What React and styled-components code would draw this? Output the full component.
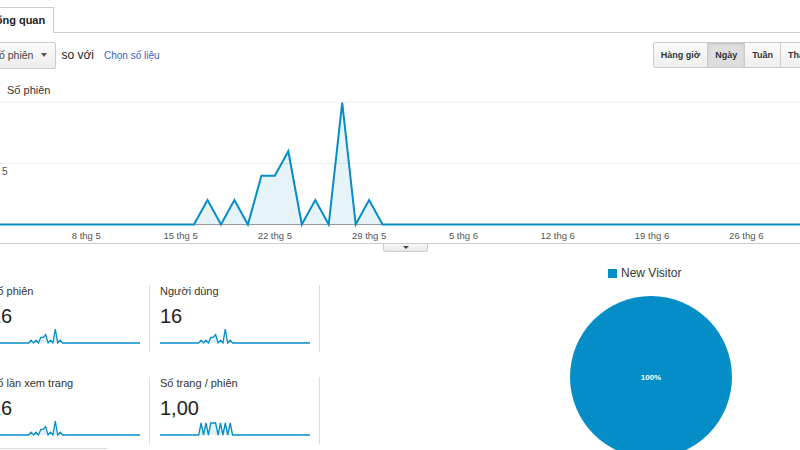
import styled, { createGlobalStyle } from "styled-components";

const GlobalStyle = createGlobalStyle`
  html, body {
    margin: 0;
    padding: 0;
    background: #fff;
    overflow: hidden;
  }
  body {
    font-family: "Liberation Sans", Arial, sans-serif;
  }
`;

const BLUE = "#058dc7";
const DAYS = 63;
const STEP = 13.47;
const X0 = -21.5;

const sessions = Array(DAYS).fill(0);
Object.entries({ 17: 2, 19: 2, 21: 4, 22: 4, 23: 6, 25: 2, 27: 10, 29: 2 }).forEach(
  ([d, v]) => (sessions[d] = v)
);
const pagesPerSession = sessions.map((v) => (v > 0 ? 1 : 0));

const dateLabels = [
  [8, "8 thg 5"],
  [15, "15 thg 5"],
  [22, "22 thg 5"],
  [29, "29 thg 5"],
  [36, "5 thg 6"],
  [43, "12 thg 6"],
  [50, "19 thg 6"],
  [57, "26 thg 6"],
];

const BASE = 224.5;
const UNIT = 12.2;

const mainPoints = sessions.map((v, d) => [X0 + d * STEP, BASE - v * UNIT]);
const toStr = (pts) => pts.map(([x, y]) => `${x.toFixed(1)},${y.toFixed(1)}`).join(" ");

const sparkPoints = (data, peak) => {
  const max = Math.max(...data);
  return data.map((v, d) => [(d * 150) / (DAYS - 1), 16 - (v / max) * peak]);
};

const stats = [
  { title: "Số phiên", value: "16", data: sessions, peak: 14 },
  { title: "Người dùng", value: "16", data: sessions, peak: 14 },
  { title: "Số lần xem trang", value: "16", data: sessions, peak: 14 },
  { title: "Số trang / phiên", value: "1,00", data: pagesPerSession, peak: 12 },
];

export default function App() {
  return (
    <>
      <GlobalStyle />
      <Page>
        <TabBar>
          <Tab>Tổng quan</Tab>
        </TabBar>

        <Controls>
          <Select>
            Số phiên
            <Caret />
          </Select>
          <Versus>so với</Versus>
          <MetricLink>Chọn số liệu</MetricLink>
          <ButtonGroup>
            <RangeButton>Hàng giờ</RangeButton>
            <RangeButton $active>Ngày</RangeButton>
            <RangeButton>Tuần</RangeButton>
            <RangeButton>Tháng</RangeButton>
          </ButtonGroup>
        </Controls>

        <ChartLabel>Số phiên</ChartLabel>
        <ChartBox>
          <svg width="840" height="145" viewBox="-20 98 840 145">
            <line x1="-20" x2="820" y1="102" y2="102" stroke="#eee" />
            <line x1="-20" x2="820" y1="163.5" y2="163.5" stroke="#eee" />
            <text x="2" y="174.5" fontSize="10" fill="#555" fontFamily="Liberation Sans, Arial, sans-serif">
              5
            </text>
            <polygon
              points={toStr([[X0, BASE], ...mainPoints, [X0 + (DAYS - 1) * STEP, BASE]])}
              fill={BLUE}
              fillOpacity="0.1"
            />
            <line x1="-20" x2="820" y1={BASE} y2={BASE} stroke="#999" />
            <polyline
              points={toStr(mainPoints)}
              fill="none"
              stroke={BLUE}
              strokeWidth="2"
              strokeLinejoin="miter"
            />
            {dateLabels.map(([d, label]) => (
              <text
                key={label}
                x={X0 + d * STEP}
                y="238.5"
                textAnchor="middle"
                fontSize="9.5"
                fill="#555"
                fontFamily="Liberation Sans, Arial, sans-serif"
              >
                {label}
              </text>
            ))}
          </svg>
        </ChartBox>
        <TogglerRow>
          <Toggler>
            <SmallCaret />
          </Toggler>
        </TogglerRow>

        <Lower>
          <StatsColumn>
            <StatsGrid>
              {stats.map((s) => {
                const pts = sparkPoints(s.data, s.peak);
                return (
                  <Card key={s.title}>
                    <CardTitle>{s.title}</CardTitle>
                    <CardValue>{s.value}</CardValue>
                    <Spark width="150" height="25" viewBox="0 0 150 25">
                      <polygon points={toStr([[0, 16], ...pts, [150, 16]])} fill={BLUE} fillOpacity="0.12" />
                      <polyline points={toStr(pts)} fill="none" stroke={BLUE} strokeWidth="1.3" />
                    </Spark>
                  </Card>
                );
              })}
            </StatsGrid>
            <FooterEdge />
          </StatsColumn>

          <PieColumn>
            <Legend>
              <Swatch />
              New Visitor
            </Legend>
            <PieBox width="162" height="162" viewBox="0 0 162 162">
              <circle cx="81" cy="81" r="81" fill={BLUE} />
              <text
                x="81"
                y="84"
                textAnchor="middle"
                fontSize="8"
                fontWeight="bold"
                fill="#fff"
                fontFamily="Liberation Sans, Arial, sans-serif"
              >
                100%
              </text>
            </PieBox>
          </PieColumn>
        </Lower>
      </Page>
    </>
  );
}

const Page = styled.div`
  width: 840px;
  height: 450px;
  margin-left: -20px;
  overflow: hidden;
  color: #333;
`;

const TabBar = styled.div`
  display: flex;
  align-items: flex-end;
  height: 32px;
  border-bottom: 1px solid #ccc;
`;

const Tab = styled.div`
  height: 24px;
  line-height: 24px;
  padding: 0 8px;
  margin-bottom: -1px;
  border: 1px solid #ccc;
  border-bottom-color: #fff;
  background: #fff;
  font-size: 11px;
  font-weight: bold;
  color: #222;
`;

const Controls = styled.div`
  display: flex;
  align-items: center;
  height: 28px;
  margin-top: 8px;
`;

const Select = styled.div`
  display: flex;
  align-items: center;
  gap: 8px;
  height: 25px;
  padding: 0 8px 0 11px;
  border: 1px solid #ccc;
  border-radius: 2px;
  background: linear-gradient(#fbfbfb, #ededed);
  font-size: 10.5px;
  color: #444;
`;

const Caret = styled.span`
  width: 0;
  height: 0;
  border-left: 3.5px solid transparent;
  border-right: 3.5px solid transparent;
  border-top: 4px solid #555;
`;

const Versus = styled.span`
  margin-left: 5px;
  font-size: 12px;
  color: #222;
`;

const MetricLink = styled.span`
  margin-left: 10px;
  font-size: 10px;
  color: #3366bb;
`;

const ButtonGroup = styled.div`
  display: flex;
  margin-left: auto;
  margin-right: -3px;
  border: 1px solid #ccc;
  border-radius: 2px;
  background: linear-gradient(#fbfbfb, #efefef);
`;

const RangeButton = styled.div`
  height: 24px;
  line-height: 24px;
  padding: 0 7px;
  font-size: 9px;
  font-weight: bold;
  color: #333;
  & + & {
    border-left: 1px solid #ccc;
  }
  background: ${(p) => (p.$active ? "#dedede" : "transparent")};
  box-shadow: ${(p) => (p.$active ? "inset 0 1px 2px rgba(0,0,0,0.15)" : "none")};
`;

const ChartLabel = styled.div`
  margin-top: 14px;
  padding-left: 27px;
  height: 15px;
  line-height: 15px;
  font-size: 11px;
  color: #333;
`;

const ChartBox = styled.div`
  height: 145px;
  border-bottom: 1px solid #ccc;
  svg {
    display: block;
  }
`;

const TogglerRow = styled.div`
  display: flex;
  padding-left: 403px;
`;

const Toggler = styled.div`
  display: flex;
  align-items: center;
  justify-content: center;
  width: 43px;
  height: 7px;
  border: 1px solid #ccc;
  border-top: none;
  border-radius: 0 0 3px 3px;
  background: linear-gradient(#f7f7f7, #e9e9e9);
`;

const SmallCaret = styled.span`
  width: 0;
  height: 0;
  border-left: 3px solid transparent;
  border-right: 3px solid transparent;
  border-top: 3px solid #444;
`;

const Lower = styled.div`
  display: flex;
  align-items: flex-start;
  margin-top: 14px;
`;

const StatsColumn = styled.div`
  display: flex;
  flex-direction: column;
  padding-top: 19px;
`;

const StatsGrid = styled.div`
  display: grid;
  grid-template-columns: repeat(2, 170px);
  row-gap: 25px;
`;

const Card = styled.div`
  display: flex;
  flex-direction: column;
  height: 67px;
  padding: 0 9px 0 10px;
  border-right: 1px solid #ddd;
`;

const CardTitle = styled.div`
  font-size: 11px;
  line-height: 13px;
  color: #333;
  white-space: nowrap;
`;

const CardValue = styled.div`
  margin-top: 7px;
  font-size: 20px;
  line-height: 22px;
  color: #222;
`;

const Spark = styled.svg`
  display: block;
`;

const FooterEdge = styled.div`
  width: 127px;
  height: 4px;
  margin-top: 4px;
  border-top: 1px solid #ddd;
`;

const PieColumn = styled.div`
  display: flex;
  flex-direction: column;
  width: 162px;
  margin-left: 250px;
`;

const Legend = styled.div`
  display: flex;
  align-items: center;
  gap: 4px;
  height: 14px;
  padding-left: 38px;
  font-size: 12px;
  color: #333;
  white-space: nowrap;
`;

const Swatch = styled.span`
  width: 9px;
  height: 9px;
  background: ${BLUE};
`;

const PieBox = styled.svg`
  display: block;
  margin-top: 16px;
`;
